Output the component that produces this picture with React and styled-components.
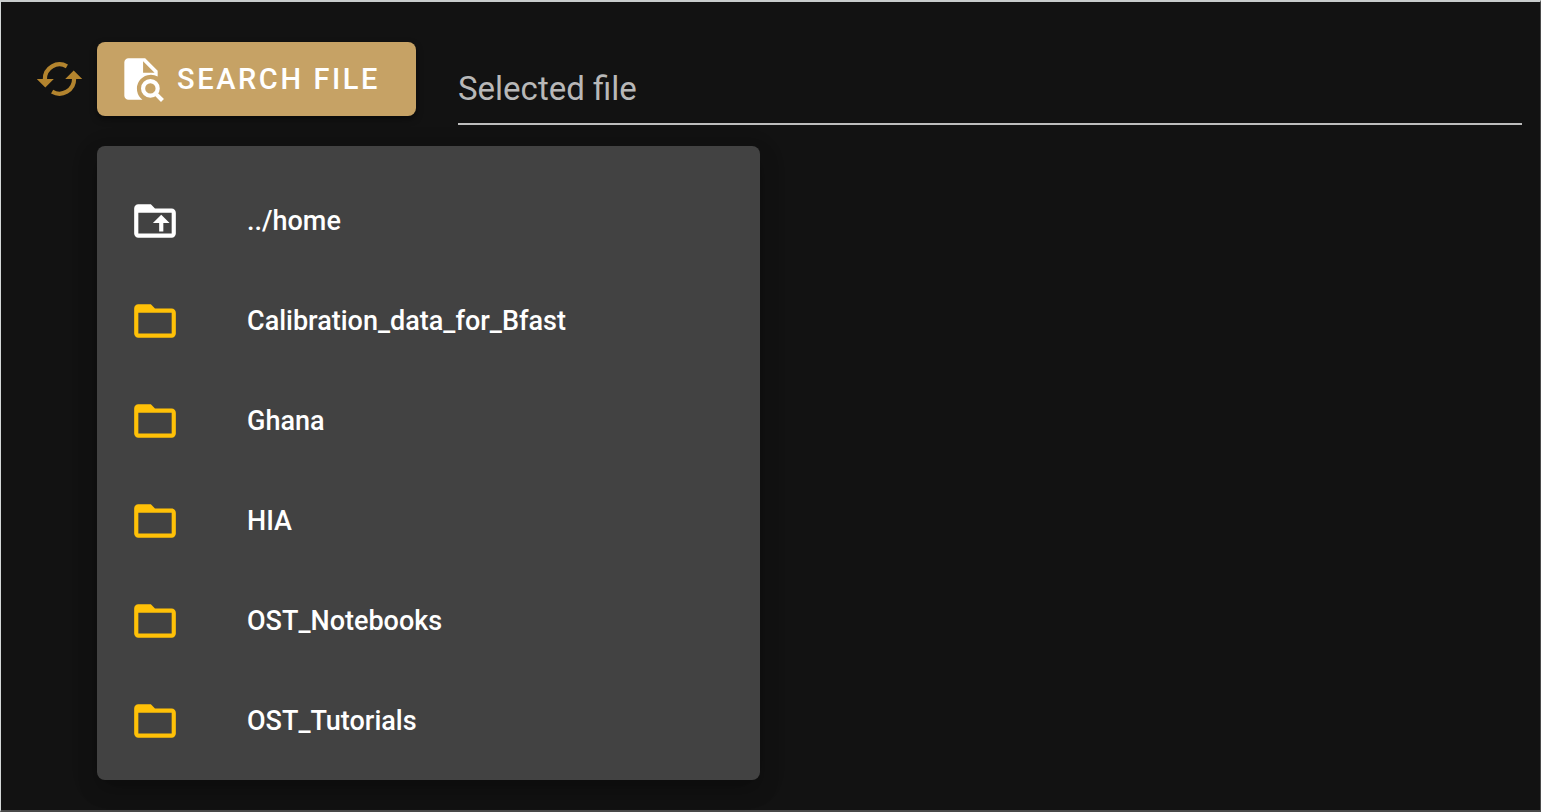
import React from "react";
import styled, { createGlobalStyle } from "styled-components";

const GlobalStyle = createGlobalStyle`
  *, *::before, *::after { box-sizing: border-box; }
  body {
    margin: 0;
    background: #121212;
    color: #fff;
    font-family: Roboto, "Liberation Sans", sans-serif;
  }
`;

const Page = styled.main`
  min-height: 100vh;
  padding: 40px 18px 30px 36px;
  background: #121212;
  border: 1px solid #4a4a4a;
  border-top: 2px solid #c8cccc;
  border-left-color: #d4d8d8;
  border-bottom-width: 2px;
`;

const Toolbar = styled.div`
  display: flex;
  align-items: flex-start;
`;

const ReloadButton = styled.button`
  display: flex;
  width: 46px;
  height: 74px;
  margin-right: 14px;
  padding: 0;
  align-items: center;
  border: 0;
  background: none;
  color: #b3842e;
  cursor: pointer;
`;

const SearchButton = styled.button`
  display: flex;
  width: 319px;
  height: 74px;
  padding: 0 19px;
  align-items: center;
  gap: 11px;
  border: 0;
  border-radius: 8px;
  background: #c6a265;
  box-shadow: 0 3px 6px rgba(0, 0, 0, 0.5);
  color: #fff;
  font: 500 29px/40px Roboto, "Liberation Sans", sans-serif;
  letter-spacing: 0.09em;
  text-transform: uppercase;
  white-space: nowrap;
  cursor: pointer;
`;

const FileInput = styled.input`
  flex: 1;
  min-width: 0;
  height: 83px;
  margin-left: 42px;
  padding: 12px 0 0;
  border: 0;
  border-bottom: 2px solid #bdbdbd;
  border-radius: 0;
  outline: 0;
  background: none;
  color: #fff;
  font: 400 33px/40px Roboto, "Liberation Sans", sans-serif;
  &::placeholder { color: #b8b8b8; opacity: 1; }
`;

const Menu = styled.ul`
  width: 100%;
  max-width: 663px;
  margin: 21px 0 0 60px;
  padding: 25px 0 9px;
  list-style: none;
  border-radius: 8px;
  background: #424242;
  box-shadow: 0 10px 20px rgba(0, 0, 0, 0.2), 0 6px 28px rgba(0, 0, 0, 0.14);
`;

const Entry = styled.button`
  display: flex;
  width: 100%;
  height: 100px;
  padding: 0 33px;
  align-items: center;
  gap: 67px;
  border: 0;
  background: none;
  color: #fff;
  font: 500 27px/40px Roboto, "Liberation Sans", sans-serif;
  text-align: left;
  cursor: pointer;
`;

const Svg = styled.svg`
  display: block;
  flex: none;
  width: ${(p) => p.$size}px;
  height: ${(p) => p.$size}px;
  fill: ${(p) => p.$color || "currentColor"};
`;

const FOLDER =
  "M20 18H4V8h16m0-2h-8l-2-2H4c-1.11 0-2 .89-2 2v12a2 2 0 0 0 2 2h16a2 2 0 0 0 2-2V8c0-1.11-.9-2-2-2Z";
const ARROW = "M14 17v-4h-3l4-4 4 4h-3v4Z";

const FolderIcon = ({ up }) => (
  <Svg $size={50} $color={up ? "#fff" : "#ffc107"} viewBox="0 0 24 24" aria-hidden="true">
    <path d={FOLDER} />
    {up && <path d={ARROW} />}
  </Svg>
);

const ReloadIcon = () => (
  <Svg $size={46} viewBox="0 0 46 46" aria-hidden="true">
    <g fill="none" stroke="currentColor" strokeWidth="4.2">
      <path d="M29.9 10.4A14.6 14.6 0 0 0 7.9 23.2" />
      <path d="M15.1 35.6A14.6 14.6 0 0 0 37.1 22.8" />
    </g>
    <path d="M-.2 23H16.8L8.3 31.6ZM28.2 23H45.2L36.7 14.4Z" />
  </Svg>
);

const FileSearchIcon = () => (
  <Svg $size={50} viewBox="0 0 24 24" aria-hidden="true">
    <path
      fillRule="evenodd"
      d="M6 2H14L20 8V10.8A6.7 6.7 0 0 0 12.7 22H6A2 2 0 0 1 4 20V4A2 2 0 0 1 6 2ZM13 3.5V9H18.5Z"
    />
    <g fill="none" stroke="currentColor" strokeWidth="2">
      <circle cx="16.5" cy="16.5" r="3.5" />
      <path d="M18.9 18.9L22.3 22.3" />
    </g>
  </Svg>
);

const ENTRIES = [
  { name: "../home", up: true },
  { name: "Calibration_data_for_Bfast" },
  { name: "Ghana" },
  { name: "HIA" },
  { name: "OST_Notebooks" },
  { name: "OST_Tutorials" },
];

export default function App() {
  return (
    <>
      <GlobalStyle />
      <Page>
        <Toolbar>
          <ReloadButton type="button" aria-label="Reload">
            <ReloadIcon />
          </ReloadButton>
          <SearchButton type="button">
            <FileSearchIcon />
            Search file
          </SearchButton>
          <FileInput type="text" placeholder="Selected file" aria-label="Selected file" readOnly />
        </Toolbar>
        <Menu>
          {ENTRIES.map((e) => (
            <li key={e.name}>
              <Entry type="button">
                <FolderIcon up={e.up} />
                {e.name}
              </Entry>
            </li>
          ))}
        </Menu>
      </Page>
    </>
  );
}
